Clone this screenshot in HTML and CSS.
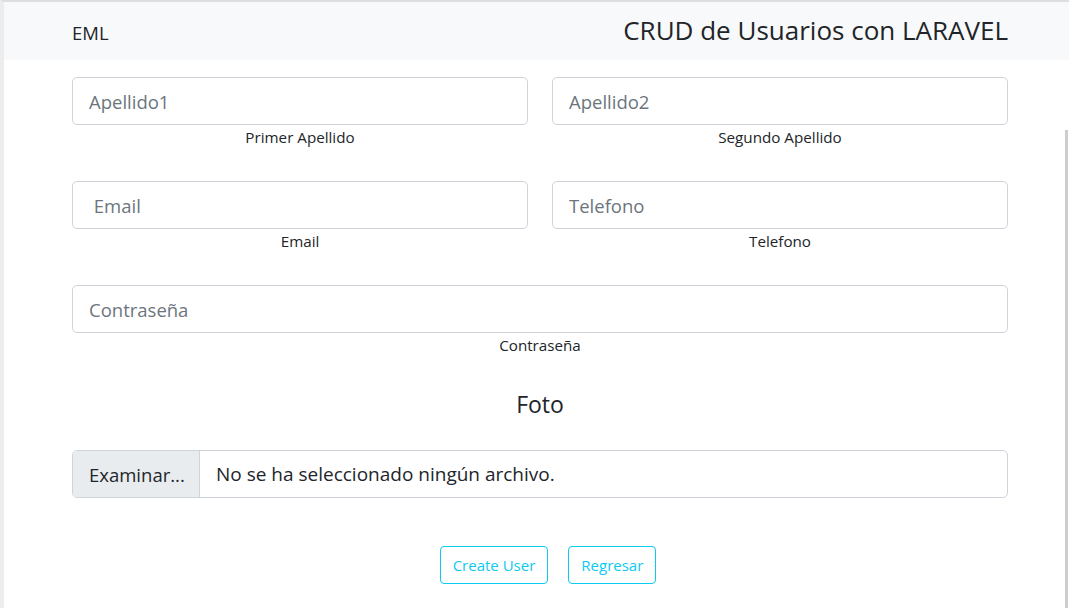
FILE: index.html
```html
<!DOCTYPE html>
<html lang="es">
<head>
<meta charset="utf-8">
<title>CRUD de Usuarios con LARAVEL</title>
<link rel="stylesheet" href="styles.css">
</head>
<body>
<div class="frame">
  <nav class="navbar">
    <div class="container nav-inner">
      <span class="brand">EML</span>
      <h3 class="title">CRUD de Usuarios con LARAVEL</h3>
    </div>
  </nav>
  <main class="container form">
    <div class="row two">
      <div class="field">
        <input class="control" type="text" placeholder="Apellido1">
        <div class="hint">Primer Apellido</div>
      </div>
      <div class="field">
        <input class="control" type="text" placeholder="Apellido2">
        <div class="hint">Segundo Apellido</div>
      </div>
    </div>
    <div class="row two">
      <div class="field">
        <input class="control" type="text" placeholder=" Email">
        <div class="hint">Email</div>
      </div>
      <div class="field">
        <input class="control" type="text" placeholder="Telefono">
        <div class="hint">Telefono</div>
      </div>
    </div>
    <div class="row">
      <div class="field">
        <input class="control" type="text" placeholder="Contraseña">
        <div class="hint">Contraseña</div>
      </div>
    </div>
    <h4 class="foto">Foto</h4>
    <div class="file">
      <span class="file-btn">Examinar...</span>
      <span class="file-name">No se ha seleccionado ningún archivo.</span>
    </div>
    <div class="actions">
      <button class="btn">Create User</button>
      <button class="btn">Regresar</button>
    </div>
  </main>
  <div class="scroll-thumb"></div>
</div>
</body>
</html>
```
FILE: styles.css
```css
html, body {
  margin: 0;
  padding: 0;
  height: 100%;
  overflow: hidden;
}
body {
  font-family: "Open Sans", "Noto Sans", sans-serif;
  color: #212529;
  background: #fff;
}
.frame {
  position: relative;
  min-height: 100%;
  border-top: 2px solid #dedede;
  border-left: 4px solid #ededed;
  box-sizing: border-box;
}
.container {
  width: 936px;
  margin-left: 68px;
}
.navbar {
  background: #f8f9fa;
  height: 58px;
}
.nav-inner {
  height: 100%;
  display: flex;
  align-items: center;
  justify-content: space-between;
}
.brand {
  font-size: 18.5px;
  line-height: 1;
  margin-top: 4px;
}
.title {
  margin: 0;
  font-weight: 400;
  font-size: 26px;
  line-height: 1;
  margin-top: -2px;
}
.form {
  padding-top: 17px;
}
.row {
  margin-bottom: 32px;
}
.row.two {
  display: grid;
  grid-template-columns: 1fr 1fr;
  column-gap: 24px;
}
.control {
  display: block;
  width: 100%;
  box-sizing: border-box;
  height: 48px;
  padding: 0 16px;
  border: 1px solid #ced4da;
  border-radius: 5px;
  font-family: inherit;
  font-size: 18.5px;
  color: #212529;
  background: #fff;
  outline: none;
}
.control::placeholder {
  color: #6c757d;
}
.hint {
  text-align: center;
  font-size: 15.2px;
  line-height: 24px;
}
.foto {
  margin: 31px 0 31px;
  text-align: center;
  font-weight: 400;
  font-size: 23px;
  line-height: 30px;
}
.file {
  display: flex;
  height: 48px;
  box-sizing: border-box;
  border: 1px solid #ced4da;
  border-radius: 5px;
  overflow: hidden;
  font-size: 19px;
}
.file-btn {
  display: flex;
  align-items: center;
  width: 127px;
  padding-left: 16px;
  box-sizing: border-box;
  background: #e9ecef;
  border-right: 1px solid #ced4da;
  font-size: 18.5px;
}
.file-name {
  display: flex;
  align-items: center;
  padding-left: 16px;
}
.actions {
  display: flex;
  justify-content: center;
  gap: 20px;
  margin-top: 48px;
  padding-left: 16px;
}
.btn {
  height: 38px;
  padding: 0 12px;
  border: 1px solid #0dcaf0;
  border-radius: 4px;
  background: #fff;
  color: #0dcaf0;
  font-family: inherit;
  font-size: 15px;
}
.scroll-thumb {
  position: absolute;
  right: 1px;
  top: 128px;
  bottom: 0;
  width: 3px;
  background: #cdcdcd;
}
```
